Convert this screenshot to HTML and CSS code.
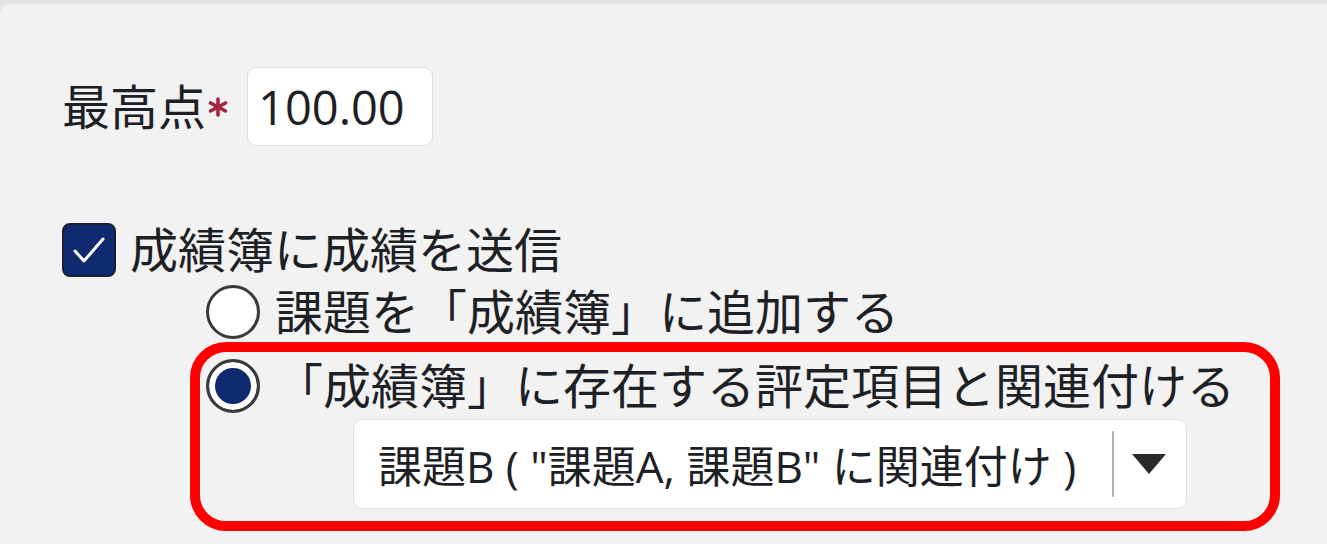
FILE: index.html
```html
<!DOCTYPE html>
<html lang="ja">
<head>
  <meta charset="UTF-8" />
  <meta name="viewport" content="width=device-width, initial-scale=1.0" />
  <title>評定設定</title>
  <link rel="stylesheet" href="styles.css">
</head>
<body>
  <div class="panel">
    <div class="row grade-row">
      <label class="label" for="grade">最高点</label>
      <svg class="required" width="22" height="20" viewBox="0 0 22 20">
        <g stroke="#a3243b" stroke-width="3.6" stroke-linecap="round">
          <line x1="11" y1="2" x2="11" y2="18" />
          <line x1="3.5" y1="6" x2="18.5" y2="14" />
          <line x1="3.5" y1="14" x2="18.5" y2="6" />
        </g>
      </svg>
      <input class="grade-input" id="grade" type="text" value="100.00">
    </div>

    <div class="row check-row">
      <span class="checkbox">
        <svg width="50" height="50" viewBox="0 0 50 50">
          <polyline points="11,26 20,36 39,14" fill="none" stroke="#fff" stroke-width="3" stroke-linecap="round" stroke-linejoin="round" />
        </svg>
      </span>
      <span class="text">成績簿に成績を送信</span>
    </div>

    <div class="choices">
      <div class="row radio-row">
        <span class="radio"></span>
        <span class="text">課題を「成績簿」に追加する</span>
      </div>

      <div class="highlight">
        <div class="row radio-row">
          <span class="radio checked"></span>
          <span class="text">「成績簿」に存在する評定項目と関連付ける</span>
        </div>
        <div class="select">
          <span class="select-value">課題B ( "課題A, 課題B" に関連付け )</span>
          <span class="select-divider"></span>
          <svg class="select-arrow" width="34" height="20" viewBox="0 0 34 20">
            <polygon points="0,0 34,0 17,20" fill="#2b2b2b" />
          </svg>
        </div>
      </div>
    </div>
  </div>
</body>
</html>
```

FILE: styles.css
```css
body {
  margin: 0;
  background: #e4e4e4;
  font-family: "Open Sans", "Noto Sans CJK JP", sans-serif;
  color: #1d2125;
  overflow: hidden;
}
.panel {
  margin-top: 4px;
  height: 540px;
  background: #f2f2f2;
  border-top-left-radius: 10px;
  padding: 63px 0 0 62px;
  box-sizing: border-box;
}
.row {
  display: flex;
  align-items: center;
  font-size: 48px;
  line-height: 1;
}

/* max grade */
.grade-row {
  height: 79px;
}
.required {
  margin: 0 18px 0 1px;
}
.grade-input {
  width: 186px;
  height: 79px;
  box-sizing: border-box;
  padding: 0 0 0 10px;
  border: 1px solid #dedede;
  border-radius: 9px;
  background: #fff;
  font-family: "Open Sans", "Noto Sans CJK JP", sans-serif;
  font-size: 47px;
  color: #1d2125;
  outline: none;
}

/* send to gradebook */
.check-row {
  height: 54px;
  margin-top: 77px;
}
.checkbox {
  width: 54px;
  height: 54px;
  box-sizing: border-box;
  border: 2px solid #1b1f33;
  border-radius: 8px;
  background: #0f2a6e;
  display: flex;
  align-items: center;
  justify-content: center;
  margin-right: 14px;
}

/* gradebook options */
.choices {
  margin: 8px 0 0 144px;
}
.radio-row {
  height: 54px;
}
.radio {
  width: 54px;
  height: 54px;
  box-sizing: border-box;
  border: 3px solid #3a3a3a;
  border-radius: 50%;
  background: #fff;
  margin-right: 15px;
  flex: none;
}
.radio.checked {
  background: #0f2a6e;
  box-shadow: inset 0 0 0 6px #fff;
}
.highlight {
  width: 1090px;
  box-sizing: border-box;
  margin: 3px 0 0 -16px;
  padding: 7px 0 12px 6px;
  border: 10px solid #ff0000;
  border-radius: 36px;
}
.select {
  width: 834px;
  height: 90px;
  box-sizing: border-box;
  margin: 6px 0 0 147px;
  padding: 0 20px 0 24px;
  background: #fff;
  border: 1px solid #e0e0e0;
  border-radius: 9px;
  display: flex;
  align-items: center;
  font-size: 44px;
}
.select-value {
  flex: 1;
  white-space: nowrap;
}
.select-divider {
  width: 2px;
  height: 66px;
  background: #b3b3b3;
  margin-right: 18px;
}
```
